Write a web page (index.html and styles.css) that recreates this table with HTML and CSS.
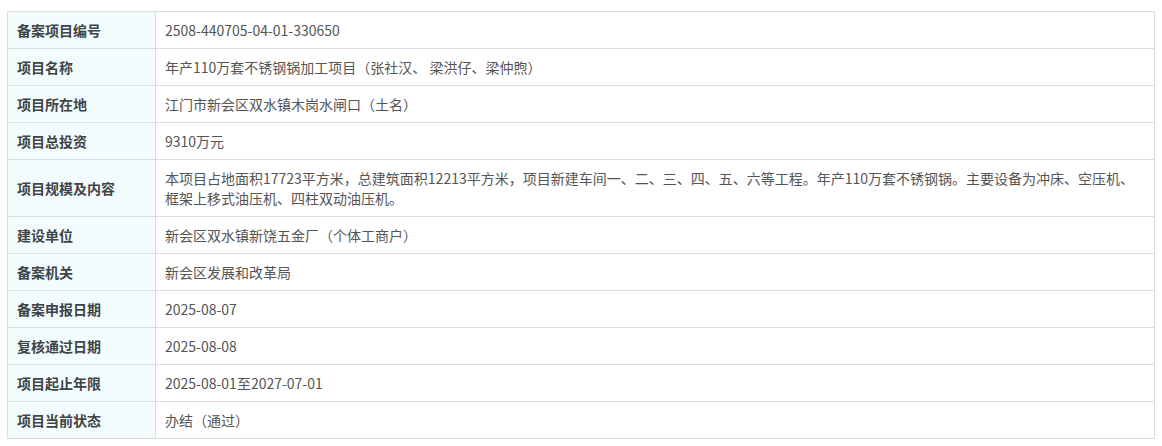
FILE: index.html
```html
<!DOCTYPE html>
<html lang="zh-CN">
<head>
    <meta charset="UTF-8">
    <title>项目备案信息</title>
    <link rel="stylesheet" href="styles.css">
</head>
<body>
    <table class="info-table">
        <tr><th>备案项目编号</th><td>2508-440705-04-01-330650</td></tr>
        <tr><th>项目名称</th><td>年产110万套不锈钢锅加工项目（张社汉、 梁洪仔、梁仲煦）</td></tr>
        <tr><th>项目所在地</th><td>江门市新会区双水镇木岗水闸口（土名）</td></tr>
        <tr><th>项目总投资</th><td>9310万元</td></tr>
        <tr><th>项目规模及内容</th><td>本项目占地面积17723平方米，总建筑面积12213平方米，项目新建车间一、二、三、四、五、六等工程。年产110万套不锈钢锅。主要设备为冲床、空压机、框架上移式油压机、四柱双动油压机。</td></tr>
        <tr><th>建设单位</th><td>新会区双水镇新饶五金厂（个体工商户）</td></tr>
        <tr><th>备案机关</th><td>新会区发展和改革局</td></tr>
        <tr><th>备案申报日期</th><td>2025-08-07</td></tr>
        <tr><th>复核通过日期</th><td>2025-08-08</td></tr>
        <tr><th>项目起止年限</th><td>2025-08-01至2027-07-01</td></tr>
        <tr><th>项目当前状态</th><td>办结（通过）</td></tr>
    </table>
</body>
</html>
```

FILE: styles.css
```css
body {
    margin: 11px 7px;
    font-family: "Noto Sans CJK SC", "Liberation Sans", sans-serif;
    font-size: 14px;
    background-color: #fff;
}
.info-table {
    width: 100%;
    border-collapse: collapse;
    border: 1px solid #ddd;
}
.info-table th,
.info-table td {
    border: 1px solid #ddd;
    padding: 8px 10px 8px 9px;
    line-height: 20px;
    text-align: left;
    vertical-align: middle;
}
.info-table th {
    width: 128px;
    background-color: #f3fcfc;
    color: #3f4448;
    font-weight: bold;
}
.info-table td {
    color: #555;
}
```
